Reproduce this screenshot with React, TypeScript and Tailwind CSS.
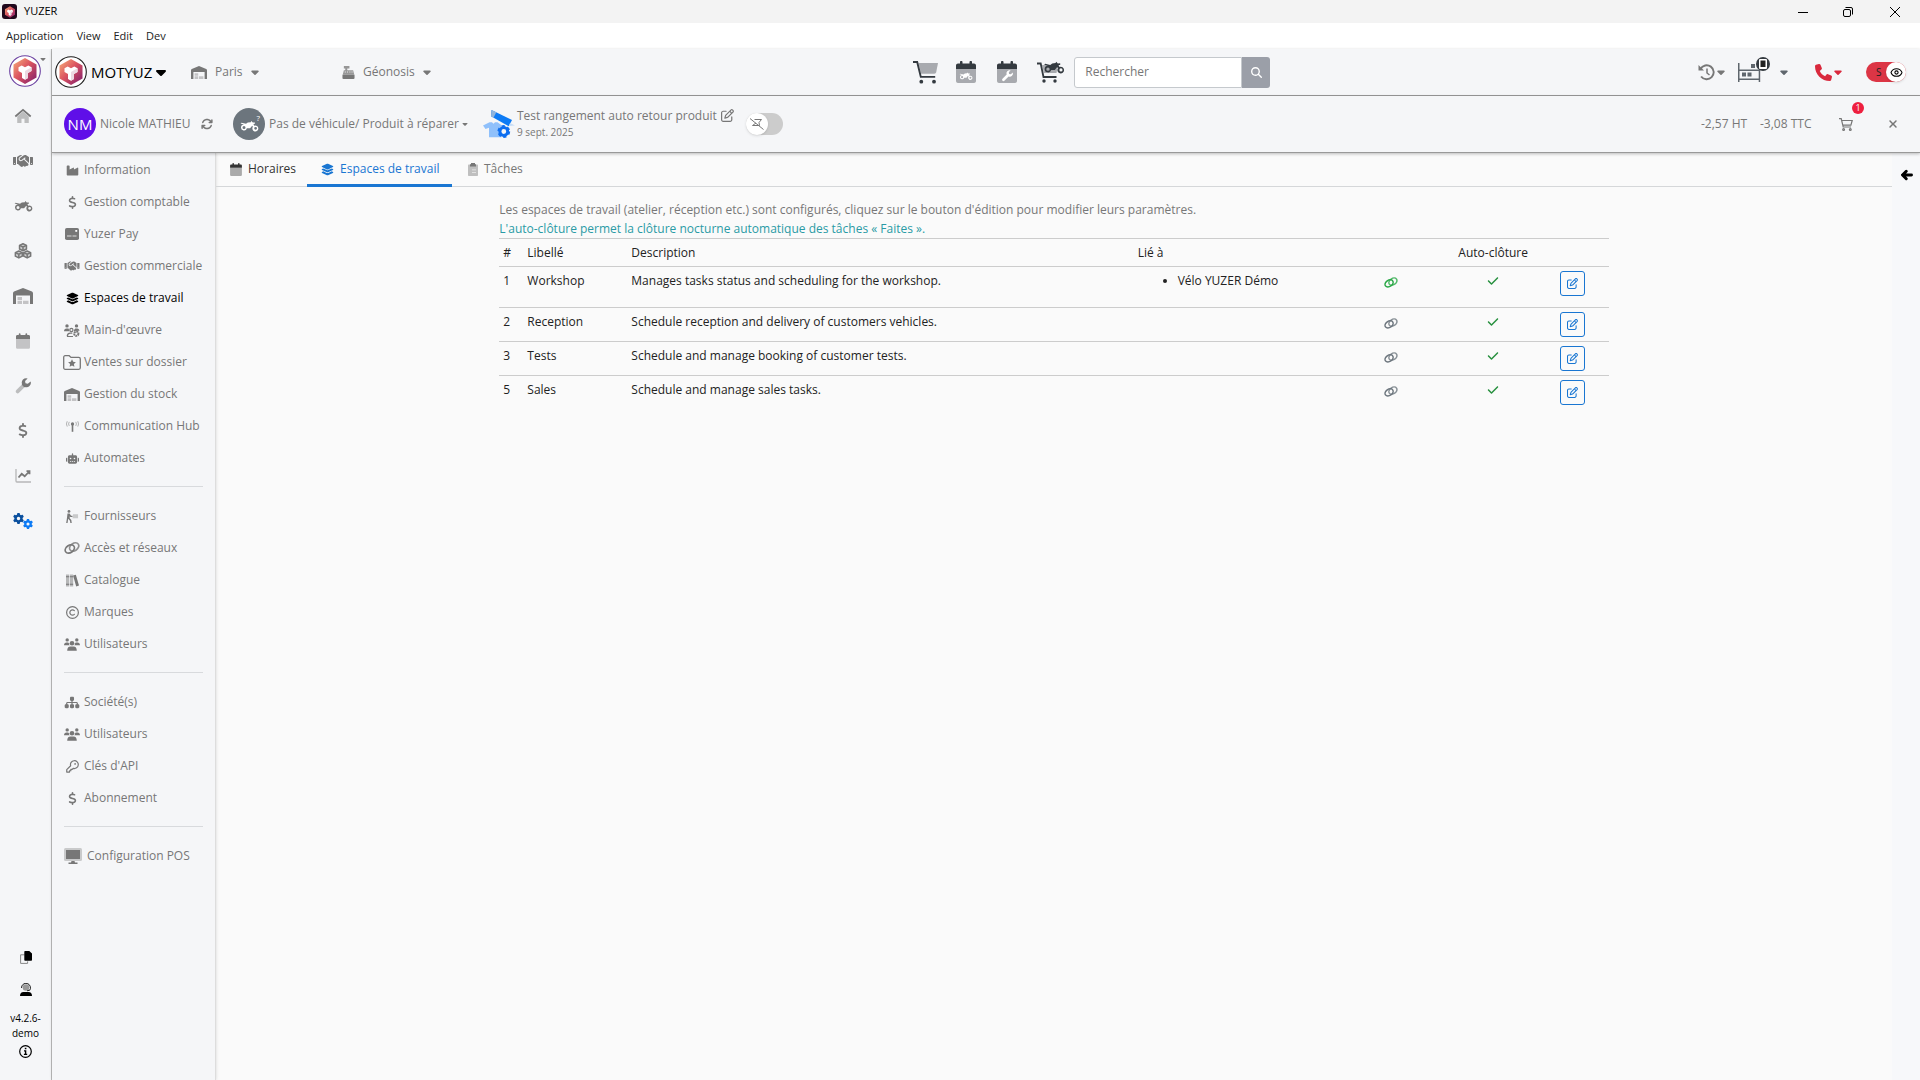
import React, { useState } from 'react';
import { clsx } from 'clsx';
import {
  FaArrowLeft,
  FaArrowsRotate,
  FaCaretDown,
  FaCheck,
  FaDollarSign,
  FaGear,
  FaHandshake,
  FaIndustry,
  FaLayerGroup,
  FaMagnifyingGlass,
  FaPhone,
  FaRegCopyright,
  FaRegPenToSquare,
  FaRobot,
  FaSitemap,
  FaXmark,
} from 'react-icons/fa6';
import { Eye } from 'lucide-react';

interface IconProps {
  className?: string;
}

/* ---------- Icons ---------- */

const YuzerLogo: React.FC<IconProps & { ring?: string }> = ({ className, ring }) => (
  <svg viewBox="0 0 32 32" className={className}>
    <defs>
      <linearGradient id="yuzer" x1="0" y1="0" x2="1" y2="1">
        <stop offset="0" stopColor="#f7b07a" />
        <stop offset="0.45" stopColor="#dc5560" />
        <stop offset="1" stopColor="#7d1a6e" />
      </linearGradient>
    </defs>
    {ring && <circle cx="16" cy="16" r="15.3" fill="#fff" stroke={ring} strokeWidth="1.1" />}
    <path d="M16 3 27.5 9.500v13L16 29 4.500 22.500v-13z" fill="url(#yuzer)" />
    <path d="m9.500 12.300 3.200-1.800 3.300 1.800 3.300-1.800 3.200 1.800v3.700L19 18v5l-3 1.700-3-1.700v-5l-3.500-2z" fill="#fff" />
    <path d="m16 16 6.500-3.700V16L19 18v5l-3 1.700z" fill="#ecd9e2" />
  </svg>
);

const HouseIcon: React.FC<IconProps> = ({ className }) => (
  <svg viewBox="0 0 20 18" className={className} fill="currentColor">
    <path d="M3.5 9.500 10 4l6.500 5.500V17h-4.800v-5H8.300v5H3.500z" opacity=".45" />
    <path d="m10 .8 9.300 8-1.300 1.500-8-6.800-8 6.800L.7 8.800z" />
  </svg>
);

const WarehouseIcon: React.FC<IconProps> = ({ className }) => (
  <svg viewBox="0 0 20 16" className={className} fill="currentColor">
    <path d="M0 16V5.200c0-.7.4-1.300 1-1.600L10 0l9 3.600c.6.3 1 .9 1 1.600V16h-3V7.500H3V16z" />
    <path d="M4.500 9H9v3H4.500zM4.500 12.800H9V16H4.500zM10 12.800h5.500V16H10z" opacity=".4" />
  </svg>
);

const CalendarIcon: React.FC<IconProps & { children?: React.ReactNode }> = ({ className, children }) => (
  <svg viewBox="0 0 20 22" className={className} fill="currentColor">
    <path d="M0 8h20v12.200a2 2 0 0 1-2 1.800H2a2 2 0 0 1-2-1.800z" opacity=".4" />
    <path d="M0 7V4.500c0-1.100.9-2 2-2h2V1c0-.6.4-1 1.200-1s1.300.4 1.300 1v1.500h7V1c0-.6.5-1 1.300-1S16 .4 16 1v1.500h2c1.100 0 2 .9 2 2V8H0z" />
    {children}
  </svg>
);

const bike =
  'M4 5.500a3 3 0 1 0 2.900 3.800h3.200l2.100-2.600.7 1.100a3 3 0 1 0 1.400-1.100l-.9-1.700 1.500-.2V3.400l-2.100.1L11.300 2l-.5 1.200-3 .3L6 4.800 1.500 3.700.6 4.600zM4 7.100a1.500 1.500 0 1 1-1.500 1.500A1.500 1.500 0 0 1 4 7.100m11.600.8a1.400 1.400 0 1 1-1.400 1.400 1.400 1.400 0 0 1 1.400-1.400';

const MotorbikeIcon: React.FC<IconProps> = ({ className }) => (
  <svg viewBox="0 1 19 12" className={className} fill="currentColor">
    <path d={bike} />
  </svg>
);

const wrench =
  'M19.500 4.300a5.500 5.500 0 0 1-7.300 6.900L5 18.400a2.300 2.300 0 0 1-3.300-3.300l7.200-7.200A5.500 5.500 0 0 1 15.800.6l-3.200 3.200.5 2.900 2.900.5z';

const WrenchIcon: React.FC<IconProps> = ({ className }) => (
  <svg viewBox="0 0 20 20" className={className} fill="currentColor">
    <path d="M8.300 8.500 1.700 15.100A2.300 2.300 0 0 0 5 18.400l6.600-6.600z" opacity=".45" />
    <path d="M19.500 4.300a5.500 5.500 0 0 1-7.300 6.900l-.6.6-3.300-3.300.6-.6A5.500 5.500 0 0 1 15.800.6l-3.200 3.200.5 2.900 2.900.5z" />
  </svg>
);

const CubesIcon: React.FC<IconProps> = ({ className }) => (
  <svg viewBox="0 0 20 18" className={className} fill="none" stroke="currentColor" strokeWidth="1.7" strokeLinejoin="round">
    {[
      [10, 4.7],
      [5.3, 12.8],
      [14.7, 12.8],
    ].map(([x, y]) => (
      <g key={x} transform={`translate(${x} ${y})`}>
        <path d="M0-3.800 3.900-2v4L0 4l-3.900-2v-4z" fill="currentColor" fillOpacity=".3" />
        <path d="M-3.900-2 0-.2 3.900-2M0-.2V4" />
      </g>
    ))}
  </svg>
);

const ChartIcon: React.FC<IconProps> = ({ className }) => (
  <svg viewBox="0 0 16 14" className={className} fill="none" stroke="currentColor">
    <path d="M1 0v12a1 1 0 0 0 1 1h14" strokeWidth="1.3" opacity=".5" />
    <path d="m3.500 8.500 3.200-3.700 3 2.500 4.500-4.800M11.500 2.200h3v3" strokeWidth="1.8" />
  </svg>
);

const LinkIcon: React.FC<IconProps> = ({ className }) => (
  <svg viewBox="0 0 16 12" className={className} fill="none" stroke="currentColor" strokeWidth="1.7">
    <ellipse cx="5.8" cy="7" rx="5" ry="3.6" transform="rotate(-35 5.8 7)" />
    <ellipse cx="10.2" cy="5" rx="5" ry="3.6" transform="rotate(-35 10.2 5)" opacity=".8" />
  </svg>
);

const CardIcon: React.FC<IconProps> = ({ className }) => (
  <svg viewBox="0 0 14 12" className={className}>
    <rect width="14" height="12" rx="1.8" fill="currentColor" />
    <path d="M2 7.500h4.500v1H2zM7.500 7.500h4v1h-4z" fill="#ddd" />
    <path d="M10.300 2h1.900v1.800h-1.900z" fill="#fff" />
  </svg>
);

const UsersIcon: React.FC<IconProps> = ({ className }) => (
  <svg viewBox="0 0 16 13" className={className} fill="currentColor">
    <circle cx="3.2" cy="1.9" r="1.7" />
    <circle cx="12.8" cy="1.9" r="1.7" />
    <circle cx="8" cy="5.2" r="2.3" />
    <path d="M0 7.300c0-1.700 1-2.900 2.500-2.900h1.700l.9 1c0 1 .2 1.500.6 1.900zM16 7.300c0-1.700-1-2.900-2.500-2.900h-1.700l-.9 1c0 1-.2 1.500-.6 1.900zM3.200 12.800c0-2.800 1.200-4.300 3.200-4.300h3.200c2 0 3.200 1.500 3.200 4.300z" />
  </svg>
);

const WorkforceIcon: React.FC<IconProps> = ({ className }) => (
  <svg viewBox="0 0 16 13" className={className} fill="currentColor">
    <circle cx="3" cy="1.9" r="1.7" />
    <circle cx="12.5" cy="1.9" r="1.7" />
    <path d="M0 7.300c0-1.700 1-2.900 2.500-2.900h2L5.200 6v1.300zM15.500 6.800c0-1.500-1-2.400-2.400-2.400h-1.800L10 6v1z" />
    <circle cx="7.400" cy="6" r="1.6" fill="none" stroke="currentColor" strokeWidth="1.2" />
    <path d="M3.300 12.300c0-2 1.200-3.200 3-3.200h2" fill="none" stroke="currentColor" strokeWidth="1.3" />
    <path d="M3 12h6v1H3z" />
    <circle cx="12.300" cy="9.700" r="2.100" fill="none" stroke="currentColor" strokeWidth="2" strokeDasharray="1.7 .5" />
  </svg>
);

const FolderStarIcon: React.FC<IconProps> = ({ className }) => (
  <svg viewBox="0 0 18 15" className={className}>
    <path
      d="M.7 2.200C.7 1.300 1.300.7 2.200.7h4L8 2.400h7.800c.9 0 1.500.6 1.500 1.500v8.900c0 .9-.6 1.500-1.500 1.500H2.200c-.9 0-1.500-.6-1.500-1.500z"
      fill="none"
      stroke="currentColor"
      strokeWidth="1.3"
    />
    <path d="m9 4.300 1.200 2.500 2.700.4-2 1.900.5 2.700L9 10.500l-2.400 1.300.5-2.700-2-1.900 2.700-.4z" fill="currentColor" />
  </svg>
);

const AntennaIcon: React.FC<IconProps> = ({ className }) => (
  <svg viewBox="0 0 16 13" className={className} fill="none" stroke="currentColor">
    <path d="M8 4v9" strokeWidth="2" />
    <circle cx="8" cy="3.300" r="2" fill="currentColor" stroke="none" />
    <path d="M4 .8a4.500 4.500 0 0 0 0 5M12 .8a4.500 4.500 0 0 1 0 5M1.500 0a6.500 6.500 0 0 0 0 6.600M14.500 0a6.500 6.500 0 0 1 0 6.600" strokeWidth="1.2" opacity=".55" />
  </svg>
);

const CarrierIcon: React.FC<IconProps> = ({ className }) => (
  <svg viewBox="0 0 14 14" className={className} fill="currentColor">
    <circle cx="3.2" cy="1.5" r="1.5" />
    <path d="M1.600 3.700h2.300l1.500 2.600H7v1.200H4.700L4 6.700v2.200l1.700 2L6.200 14H4.700l-.4-2.500-2-2L1.700 14H.2l.8-5z" />
    <path d="M7.500 4.500H13V9H6.800V8h.7z" opacity=".35" />
  </svg>
);

const BooksIcon: React.FC<IconProps> = ({ className }) => (
  <svg viewBox="0 0 14 13" className={className} fill="currentColor">
    <path d="M0 0h3.500v13H0zM4.300 0h3.400v13H4.300z" opacity=".5" />
    <path d="m7.600 1 3-.8L14 12l-3 .9z" />
    <path d="M0 2h3.500v1H0zM4.300 2h3.400v1H4.300zM0 10h3.500v1H0zM4.300 10h3.400v1H4.300z" />
  </svg>
);

const KeyIcon: React.FC<IconProps> = ({ className }) => (
  <svg viewBox="0 0 14 14" className={className} fill="none" stroke="currentColor" strokeWidth="1.3" strokeLinejoin="round">
    <path d="M5 6.200a4.200 4.200 0 1 1 2.800 2.800L6.500 10.200H5.200v1.400H3.800V13H.8v-2.600z" />
    <circle cx="9.800" cy="4.200" r=".9" fill="currentColor" stroke="none" />
  </svg>
);

const MonitorIcon: React.FC<IconProps> = ({ className }) => (
  <svg viewBox="0 0 18 16" className={className} fill="currentColor">
    <rect width="18" height="13" rx="1.5" opacity=".35" />
    <path d="M2 2h14v9H2zM7.500 13h3l.5 1.500h2.500V16h-9v-1.500H7z" />
  </svg>
);

const ClipboardIcon: React.FC<IconProps> = ({ className }) => (
  <svg viewBox="0 0 10 13" className={className} fill="currentColor">
    <path d="M1 1.500h8c.6 0 1 .4 1 1V12c0 .6-.4 1-1 1H1c-.6 0-1-.4-1-1V2.500c0-.6.4-1 1-1" opacity=".45" />
    <path d="M3 0h4v1.300h1v2.200H2V1.300h1z" />
    <path d="M4 6.500h4v.8H4zM4 9h4v.8H4z" fill="#fff" opacity=".7" />
  </svg>
);

const CashRegisterIcon: React.FC<IconProps> = ({ className }) => (
  <svg viewBox="0 0 14 14" className={className} fill="currentColor">
    <path d="M2 0h6v2.800H5.700V4.500H12l1.200 5H.8L2 4.500h1.500V2.800H2z" opacity=".75" />
    <path d="M.5 9.500h13V13c0 .6-.4 1-1 1h-11c-.6 0-1-.4-1-1z" />
    <path d="M3 6h1v1H3zM5.500 6h1v1h-1zM8 6h1v1H8zM10.300 6h1v1h-1z" fill="#f5f6f8" />
  </svg>
);

const CartIcon: React.FC<IconProps> = ({ className }) => (
  <svg viewBox="0 0 26 23" className={className}>
    <path d="M5.500 2H25l-1.800 9.300c-.2.900-.9 1.400-1.800 1.400H8z" fill="currentColor" opacity=".4" />
    <path d="M0 1h4.200l3.600 14.900h14.400" fill="none" stroke="currentColor" strokeWidth="1.9" />
    <circle cx="8.300" cy="20.700" r="1.900" fill="currentColor" />
    <circle cx="21" cy="20.700" r="1.900" fill="currentColor" />
  </svg>
);

const BikeCartIcon: React.FC<IconProps> = ({ className }) => (
  <svg viewBox="0 0 28 22" className={className}>
    <path d="M5 4h16l-1.500 8H7z" fill="currentColor" opacity=".4" />
    <path d="M0 2.500h3.700L6.500 16h13" fill="none" stroke="currentColor" strokeWidth="1.8" />
    <circle cx="7" cy="20" r="1.7" fill="currentColor" />
    <circle cx="18" cy="20" r="1.7" fill="currentColor" />
    <path d={bike} fill="currentColor" transform="translate(6.500 -1.500) scale(1.120)" />
  </svg>
);

const OutlineCartIcon: React.FC<IconProps> = ({ className }) => (
  <svg viewBox="0 0 14 13" className={className} fill="none" stroke="currentColor" strokeWidth="1.2">
    <path d="M0 .7h2.200l2 8.300H12M2.600 2.500h10.600l-1.300 4.700H3.800" />
    <circle cx="4.600" cy="11.500" r=".9" />
    <circle cx="11.300" cy="11.500" r=".9" />
  </svg>
);

const HistoryIcon: React.FC<IconProps> = ({ className }) => (
  <svg viewBox="0 0 17 17" className={className} fill="none" stroke="currentColor" strokeWidth="1.9">
    <path d="M2.500 5a7 7 0 1 1 .6 7.500" />
    <path d="M9 4.500V9l2.500 2" strokeWidth="1.5" />
    <path d="M.5 1v5.500H6z" fill="currentColor" stroke="none" />
  </svg>
);

const ShelvesIcon: React.FC<IconProps> = ({ className }) => (
  <svg viewBox="0 0 24 19" className={className} fill="currentColor">
    <path d="M0 0h1.500v6.500h20.700V19h-1.500v-2H1.500v2H0zM1.500 8v7.500h19.200V8z" fillRule="evenodd" />
    <path d="M4 9.500h4v4H4zM9.500 9.500h4v4h-4zM13 1h4v4h-4z" />
  </svg>
);

const TaskIcon: React.FC<IconProps> = ({ className }) => (
  <svg viewBox="0 0 32 28" className={className}>
    <path d="m0 15.500 6.500-3.300H9l1.500 1.500 1.500-1.500h2.500l4 3v12H6v-9.500l-3.500 1.300z" fill="#8fc0fb" />
    <path d="m8.500 0 20.500 10-3.300 6.200L8 6.300z" fill="#0d7bf5" />
    <path d="m8.500 0 4.800 2.300-2.800 5.400L8 6.300z" fill="#8fb4dc" />
    <path d="m27 13 5 2.500-6 .5z" fill="#c5dcf7" />
    <circle cx="20.800" cy="21.500" r="3.900" fill="#f5f6f8" stroke="#0d6ef0" strokeWidth="3" />
    <circle cx="20.800" cy="21.500" r="5.500" fill="none" stroke="#0d6ef0" strokeWidth="1.8" strokeDasharray="3.200 2.560" />
  </svg>
);

const CopyIcon: React.FC<IconProps> = ({ className }) => (
  <svg viewBox="0 0 12 13" className={className}>
    <path d="M4.500 3.800H.6v8.600h7v-2" fill="none" stroke="#888" />
    <path d="M5.300 0h4L12 2.500v6.200c0 .6-.4 1-1 1H5.300c-.6 0-1-.4-1-1V1c0-.6.4-1 1-1" />
  </svg>
);

const SupportIcon: React.FC<IconProps> = ({ className }) => (
  <svg viewBox="0 0 12 13" className={className}>
    <circle cx="6" cy="4.500" r="3.300" fill="#999" />
    <path d="M1.500 5a4.500 4.500 0 1 1 8.300 2.200L7 7.800" fill="none" stroke="#222" />
    <path d="M0 13c0-2.500 1.300-4 3.500-4h5c2.200 0 3.500 1.500 3.500 4z" />
  </svg>
);

const GearsIcon: React.FC<IconProps> = () => (
  <span className="flex h-4 items-start">
    <FaGear className="size-[11px] text-[#0a4f9e]" />
    <FaGear className="-ml-px size-[10px] self-end text-[#0d7bf5]" />
  </span>
);

/* ---------- Data ---------- */

type IconType = React.ComponentType<IconProps>;

const railItems: { label: string; icon: IconType; size: string }[] = [
  { label: 'Accueil', icon: HouseIcon, size: 'h-4 w-[18px]' },
  { label: 'Commercial', icon: FaHandshake as IconType, size: 'h-4 w-5' },
  { label: 'Véhicules', icon: MotorbikeIcon, size: 'h-3 w-[19px]' },
  { label: 'Produits', icon: CubesIcon, size: 'h-4 w-[18px]' },
  { label: 'Stock', icon: WarehouseIcon, size: 'h-4 w-5' },
  { label: 'Agenda', icon: CalendarIcon, size: 'h-4 w-[14px]' },
  { label: 'Atelier', icon: WrenchIcon, size: 'size-4' },
  { label: 'Comptabilité', icon: FaDollarSign as IconType, size: 'h-[15px] w-4' },
  { label: 'Statistiques', icon: ChartIcon, size: 'h-[14px] w-4' },
  { label: 'Paramètres', icon: GearsIcon, size: '' },
];

const menuGroups: { label: string; icon: IconType; active?: boolean; size?: string }[][] = [
  [
    { label: 'Information', icon: FaIndustry as IconType },
    { label: 'Gestion comptable', icon: FaDollarSign as IconType },
    { label: 'Yuzer Pay', icon: CardIcon, size: 'h-3 w-[14px]' },
    { label: 'Gestion commerciale', icon: FaHandshake as IconType, size: 'h-3 w-4' },
    { label: 'Espaces de travail', icon: FaLayerGroup as IconType, active: true },
    { label: "Main-d'œuvre", icon: WorkforceIcon, size: 'h-[13px] w-4' },
    { label: 'Ventes sur dossier', icon: FolderStarIcon, size: 'h-[15px] w-[18px]' },
    { label: 'Gestion du stock', icon: WarehouseIcon, size: 'h-[13px] w-4' },
    { label: 'Communication Hub', icon: AntennaIcon },
    { label: 'Automates', icon: FaRobot as IconType },
  ],
  [
    { label: 'Fournisseurs', icon: CarrierIcon },
    { label: 'Accès et réseaux', icon: LinkIcon, size: 'h-3 w-4' },
    { label: 'Catalogue', icon: BooksIcon },
    { label: 'Marques', icon: FaRegCopyright as IconType },
    { label: 'Utilisateurs', icon: UsersIcon, size: 'h-[13px] w-4' },
  ],
  [
    { label: 'Société(s)', icon: FaSitemap as IconType, size: 'h-[13px] w-4' },
    { label: 'Utilisateurs', icon: UsersIcon, size: 'h-[13px] w-4' },
    { label: "Clés d'API", icon: KeyIcon },
    { label: 'Abonnement', icon: FaDollarSign as IconType },
  ],
];

const workspaces = [
  { id: 1, label: 'Workshop', description: 'Manages tasks status and scheduling for the workshop.', linked: ['Vélo YUZER Démo'] },
  { id: 2, label: 'Reception', description: 'Schedule reception and delivery of customers vehicles.', linked: [] },
  { id: 3, label: 'Tests', description: 'Schedule and manage booking of customer tests.', linked: [] },
  { id: 5, label: 'Sales', description: 'Schedule and manage sales tasks.', linked: [] },
];

const tabs: { label: string; icon: IconType; iconClass: string; tabClass: string }[] = [
  { label: 'Horaires', icon: CalendarIcon, iconClass: 'h-[13px] w-3', tabClass: 'w-[91px] pl-[14px] border-transparent text-[#333]' },
  {
    label: 'Espaces de travail',
    icon: FaLayerGroup as IconType,
    iconClass: 'size-[13px]',
    tabClass: 'w-[145px] pl-[14px] border-[#1976d2] text-[#1976d2]',
  },
  { label: 'Tâches', icon: ClipboardIcon, iconClass: 'h-[13px] w-[10px]', tabClass: 'w-[84px] pl-4 border-transparent text-[#777]' },
];

/* ---------- Layout parts ---------- */

const TitleBar = () => (
  <div className="flex h-[23px] items-center bg-[#f3f3f3] pl-[2px] text-black">
    <span className="flex size-[15px] items-center justify-center rounded-[3px] bg-[#20081c]">
      <YuzerLogo className="size-[14px]" />
    </span>
    <span className="ml-[7px] text-[11px]">YUZER</span>
    <div className="ml-auto flex h-full items-center">
      <button aria-label="Réduire" className="flex h-full w-[45px] items-center justify-center">
        <svg viewBox="0 0 10 10" className="size-[10px]" fill="none" stroke="currentColor">
          <path d="M0 5.500h10" />
        </svg>
      </button>
      <button aria-label="Restaurer" className="flex h-full w-[45px] items-center justify-center">
        <svg viewBox="0 0 10 10" className="size-[10px]" fill="none" stroke="currentColor">
          <rect x=".5" y="2.500" width="7" height="7" rx="1.5" />
          <path d="M2.500.5H8A1.500 1.500 0 0 1 9.500 2v5.500" />
        </svg>
      </button>
      <button aria-label="Fermer" className="flex h-full w-[50px] items-center justify-center">
        <svg viewBox="0 0 10 10" className="size-[10px]" fill="none" stroke="currentColor">
          <path d="m0 0 10 10M10 0 0 10" />
        </svg>
      </button>
    </div>
  </div>
);

const MenuBar = () => (
  <nav className="flex h-[26px] items-center gap-[13px] bg-white pl-[6px] text-[11px] text-[#222]">
    {['Application', 'View', 'Edit', 'Dev'].map((item) => (
      <button key={item}>{item}</button>
    ))}
  </nav>
);

const Header = () => (
  <header className="relative z-10 flex h-[47px] border-b border-[#999] bg-[#f5f6f8] text-[#777] shadow-[0_1px_3px_rgba(0,0,0,0.25)]">
    <div className="flex w-[46%] items-center pl-[3px]">
      <button className="flex items-center text-black">
        <YuzerLogo ring="#1b1b1b" className="size-8" />
        <span className="ml-1 w-[64px] text-left text-[15px]">MOTYUZ</span>
        <FaCaretDown className="h-4 w-3" />
      </button>
      <label className="ml-6 flex w-[151px] items-center">
        <WarehouseIcon className="mr-2 h-[13px] w-4" />
        <select aria-label="Magasin" className="field-sizing-content appearance-none bg-transparent text-[12px]">
          <option>Paris</option>
        </select>
        <FaCaretDown className="ml-[6px] size-3" />
      </label>
      <label className="flex items-center">
        <CashRegisterIcon className="mr-2 size-[13px]" />
        <select aria-label="Caisse" className="field-sizing-content appearance-none bg-transparent text-[12px]">
          <option>Géonosis</option>
        </select>
        <FaCaretDown className="ml-[6px] size-3" />
      </label>
    </div>

    <div className="flex items-center pl-[2px] text-[#343a40]">
      <button aria-label="Vente" className="w-[43px]">
        <CartIcon className="h-[23px] w-[26px]" />
      </button>
      <button aria-label="Agenda véhicules" className="w-[41px]">
        <CalendarIcon className="h-[22px] w-5">
          <path d={bike} fill="#fff" transform="translate(3.200 10) scale(.72)" />
        </CalendarIcon>
      </button>
      <button aria-label="Agenda atelier" className="w-10">
        <CalendarIcon className="h-[22px] w-5">
          <path d={wrench} fill="#fff" transform="translate(4.500 9) scale(.58)" />
        </CalendarIcon>
      </button>
      <button aria-label="Vente véhicule" className="mr-[9px]">
        <BikeCartIcon className="h-[22px] w-7" />
      </button>
      <form className="flex h-[31px]" onSubmit={(e) => e.preventDefault()}>
        <input
          aria-label="Rechercher"
          placeholder="Rechercher"
          className="w-[168px] rounded-l-[3px] border border-[#c5c9cd] bg-white pl-[10px] text-[12px] placeholder:text-[#777]"
        />
        <button aria-label="Lancer la recherche" className="flex w-7 items-center justify-center rounded-r-[3px] bg-[#9b9fa8] text-white">
          <FaMagnifyingGlass className="size-[11px]" />
        </button>
      </form>
    </div>

    <div className="ml-auto flex items-center pr-[14px]">
      <button aria-label="Historique" className="flex w-10 items-center">
        <HistoryIcon className="size-[17px]" />
        <FaCaretDown className="size-3" />
      </button>
      <button aria-label="Entrepôt" className="relative flex w-[77px] items-center text-[#5f666d]">
        <ShelvesIcon className="h-[19px] w-6" />
        <span className="absolute -top-[6px] left-[18px] flex size-[14px] items-center justify-center rounded-full bg-[#343a40]">
          <svg viewBox="0 0 8 10" className="h-[10px] w-2">
            <rect width="8" height="10" rx="1" fill="#fff" />
            <path d="M1.500 1.500h5v6.500h-5z" fill="#222" />
          </svg>
        </span>
        <FaCaretDown className="ml-4 size-3" />
      </button>
      <button aria-label="Téléphone" className="flex w-[51px] items-center text-[#d9293d]">
        <FaPhone className="size-[17px]" />
        <FaCaretDown className="size-3" />
      </button>
      <label className="relative flex h-5 w-10 items-center rounded-full bg-[#dc3545]">
        <span className="pl-[10px] text-[10px] text-[#222]">S</span>
        <input type="checkbox" defaultChecked aria-label="Mode surveillance" className="absolute inset-0 appearance-none rounded-full" />
        <span className="absolute right-0 flex size-5 items-center justify-center rounded-full bg-white text-black shadow">
          <Eye className="size-[13px]" />
        </span>
      </label>
    </div>
  </header>
);

const ContextBar = () => (
  <div className="relative z-10 flex h-[57px] items-center border-b border-[#999] bg-[#f5f6f8] pl-3 text-[12px] text-[#777] shadow-[0_1px_3px_rgba(0,0,0,0.25)]">
    <span className="flex size-8 items-center justify-center rounded-full bg-[#5f0fe8] text-[15px] text-white">NM</span>
    <span className="ml-1 w-[101px] whitespace-nowrap">Nicole MATHIEU</span>
    <button aria-label="Changer de client" className="w-8">
      <FaArrowsRotate className="size-3" />
    </button>
    <span className="relative flex size-8 items-center justify-center rounded-full bg-[#6c757d] text-white">
      <MotorbikeIcon className="mt-1 h-3 w-[19px]" />
      <span className="absolute top-1 right-[5px] text-[8px]">?</span>
    </span>
    <button className="ml-1 flex w-[214px] items-center whitespace-nowrap">
      Pas de véhicule/ Produit à réparer
      <FaCaretDown className="ml-[2px] size-2" />
    </button>
    <TaskIcon className="h-7 w-8" />
    <div className="ml-[2px] w-[229px] leading-[17px] whitespace-nowrap">
      <p className="flex items-center gap-1">
        Test rangement auto retour produit
        <button aria-label="Modifier le titre">
          <FaRegPenToSquare className="size-[13px]" />
        </button>
      </p>
      <p className="text-[10px]">9 sept. 2025</p>
    </div>
    <label className="relative flex h-[22px] w-[37px] items-center rounded-full bg-[#ccc]">
      <input type="checkbox" aria-label="Épingler" className="absolute inset-0 appearance-none rounded-full" />
      <span className="flex size-[22px] items-center justify-center rounded-full bg-white shadow">
        <svg viewBox="0 0 14 12" className="h-3 w-[14px]" fill="none" stroke="currentColor">
          <path d="m0 .5 13.500 11M4.500 1.500h7L9 4.500l.5 3H2.500L6 5" />
        </svg>
      </span>
    </label>
    <div className="ml-auto flex items-center">
      <span className="w-[59px] whitespace-nowrap">-2,57 HT</span>
      <span className="w-[79px] whitespace-nowrap">-3,08 TTC</span>
      <button aria-label="Panier" className="relative w-12">
        <OutlineCartIcon className="h-[13px] w-[14px]" />
        <span className="absolute -top-4 left-[13px] flex size-3 items-center justify-center rounded-full bg-[#ee1f3f] text-[9px] text-white">1</span>
      </button>
      <button aria-label="Fermer le dossier" className="pr-[21px]">
        <FaXmark className="size-3" />
      </button>
    </div>
  </div>
);

const Rail = () => (
  <aside className="flex w-[51px] shrink-0 flex-col bg-[#f5f6f8]">
    <button aria-label="Yuzer" className="flex h-11 items-start pt-[6px] pl-[9px]">
      <YuzerLogo ring="#6a3fa0" className="size-8" />
      <FaCaretDown className="-ml-[2px] size-2 text-[#777]" />
    </button>
    <nav className="flex flex-1 flex-col items-center pr-[5px] text-[#777]">
      {railItems.map(({ label, icon: Icon, size }) => (
        <a key={label} href="#" aria-label={label} className="flex h-[45px] items-center justify-center">
          <Icon className={size} />
        </a>
      ))}
    </nav>
    <div className="flex flex-col items-center pb-[22px] text-black">
      <button aria-label="Copier" className="mb-[19px]">
        <CopyIcon className="h-[13px] w-3" />
      </button>
      <button aria-label="Assistance" className="mb-[15px]">
        <SupportIcon className="h-[13px] w-3" />
      </button>
      <p className="text-center text-[10px] leading-[15px]">
        v4.2.6-
        <br />
        demo
      </p>
      <button aria-label="À propos" className="mt-1">
        <svg viewBox="0 0 13 13" className="size-[13px]">
          <circle cx="6.500" cy="6.500" r="5.800" fill="none" stroke="currentColor" strokeWidth="1.2" />
          <path d="M5.800 2.800h1.600v1.500H5.800zM5 5.300h2.300v3.500h.9V10H4.900V8.800h1V6.500H5z" />
        </svg>
      </button>
    </div>
  </aside>
);

const SideMenu = () => (
  <nav className="w-[164px] shrink-0 border-r border-[#ddd] bg-[#f5f6f8] px-3 pt-px text-[12px] text-[#777] shadow-[0_0_3px_rgba(0,0,0,0.15)]">
    {menuGroups.map((group, index) => (
      <div key={index}>
        <ul>
          {group.map(({ label, icon: Icon, active, size }) => (
            <li key={label}>
              <a href="#" className={clsx('flex h-8 items-center whitespace-nowrap', active && 'text-black')}>
                <span className="mr-1 flex w-4 shrink-0 justify-center">
                  <Icon className={clsx('shrink-0', size || 'size-[13px]')} />
                </span>
                {label}
              </a>
            </li>
          ))}
        </ul>
        <hr className="mt-3 mb-[13px] border-[#d8dadd]" />
      </div>
    ))}
    <a href="#" className="flex h-8 items-center whitespace-nowrap">
      <MonitorIcon className="mr-[5px] h-4 w-[18px]" />
      Configuration POS
    </a>
  </nav>
);

const WorkspaceTable = () => (
  <table className="w-full table-fixed border-t border-[#ccc] text-left text-[12px] leading-5 text-[#222]">
    <colgroup>
      <col className="w-6" />
      <col className="w-[104px]" />
      <col />
      <col className="w-[217px]" />
      <col className="w-20" />
      <col className="w-[125px]" />
      <col className="w-[53px]" />
    </colgroup>
    <thead>
      <tr className="h-7 border-b border-[#ccc]">
        <th className="px-1 font-normal">#</th>
        <th className="px-1 font-normal">Libellé</th>
        <th className="px-1 font-normal">Description</th>
        <th className="px-1 font-normal">Lié à</th>
        <th />
        <th className="text-center font-normal">Auto-clôture</th>
        <th />
      </tr>
    </thead>
    <tbody>
      {workspaces.map(({ id, label, description, linked }) => (
        <tr key={id} className="border-b border-[#ccc] align-top last:border-0">
          <td className="p-1">{id}</td>
          <td className="p-1">{label}</td>
          <td className="p-1">{description}</td>
          <td className="p-1">
            {linked.length > 0 && (
              <ul className="mb-3 list-disc pl-10">
                {linked.map((name) => (
                  <li key={name}>{name}</li>
                ))}
              </ul>
            )}
          </td>
          <td className={clsx('p-1', linked.length > 0 ? 'text-[#28a745]' : 'text-[#6c757d]')}>
            <button aria-label={`Lier ${label}`} className="mx-auto flex h-[22px] items-center">
              <LinkIcon className="h-[11px] w-[14px]" />
            </button>
          </td>
          <td className="p-1 text-[#28903f]">
            <FaCheck className="mx-auto mt-1 size-3" />
          </td>
          <td className="p-1">
            <button aria-label={`Modifier ${label}`} className="flex size-[25px] items-center justify-center rounded-[3px] border border-[#1976d2] text-[#1976d2]">
              <FaRegPenToSquare className="size-[11px]" />
            </button>
          </td>
        </tr>
      ))}
    </tbody>
  </table>
);

const Workspaces = () => {
  const [current, setCurrent] = useState('Espaces de travail');

  return (
    <main className="min-w-0 flex-1">
      <div role="tablist" className="flex h-[34px] border-b border-[#d5d7d9] text-[12px]">
        {tabs.map(({ label, icon: Icon, iconClass, tabClass }) => (
          <button
            key={label}
            role="tab"
            aria-selected={current === label}
            onClick={() => setCurrent(label)}
            className={clsx('flex h-[34px] items-center gap-[6px] border-b-[3px] pt-px whitespace-nowrap', tabClass)}
          >
            <Icon className={iconClass} />
            {label}
          </button>
        ))}
      </div>
      <section className="mx-auto w-2/3 px-1 pt-[13px]">
        <p className="text-[12px] leading-[19px] text-[#777]">
          Les espaces de travail (atelier, réception etc.) sont configurés, cliquez sur le bouton d'édition pour modifier leurs paramètres.
        </p>
        <p className="text-[12px] leading-[19px] text-[#2a9aa5]">L'auto-clôture permet la clôture nocturne automatique des tâches « Faites ».</p>
        <WorkspaceTable />
      </section>
    </main>
  );
};

const App: React.FC = () => {
  return (
    <div className="flex min-h-screen flex-col bg-[#fafafa] font-['Open_Sans','Noto_Sans',sans-serif]">
      <TitleBar />
      <MenuBar />
      <div className="flex flex-1">
        <Rail />
        <div className="flex min-w-0 flex-1 flex-col border-l border-[#bbb]">
          <Header />
          <ContextBar />
          <div className="flex flex-1">
            <SideMenu />
            <Workspaces />
            <aside className="w-7 shrink-0 bg-[#f7f8fa]">
              <button aria-label="Ouvrir le panneau" className="ml-px flex h-11 w-full items-center justify-center text-black">
                <FaArrowLeft className="size-3 stroke-current" strokeWidth={60} />
              </button>
            </aside>
          </div>
        </div>
      </div>
    </div>
  );
};

export default App;
